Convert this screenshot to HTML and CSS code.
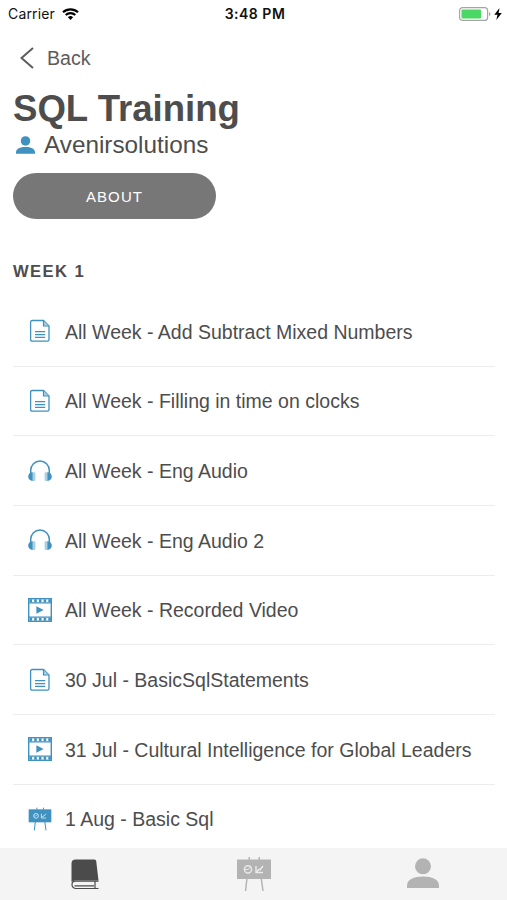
FILE: index.html
```html
<!DOCTYPE html>
<html lang="en">
<head>
<meta charset="utf-8">
<title>SQL Training</title>
<link rel="stylesheet" href="styles.css">
</head>
<body>
<svg width="0" height="0" class="sprite" aria-hidden="true">
  <symbol id="doc" viewBox="0 0 24 24">
    <path d="M4.200 1.500H15.500L21 7V20.500Q21 22.200 19.300 22.200H4.200Q2.600 22.200 2.600 20.500V3.100Q2.600 1.500 4.200 1.500Z" fill="none" stroke="currentColor" stroke-width="1.300"/>
    <path d="M15.500 1.800V7H20.800" fill="#a9d3e8" stroke="currentColor" stroke-width="1.200"/>
    <path d="M7 12.700H17.200M7 15.600H17.200M7 18.400H17.200" stroke="currentColor" stroke-width="1.300"/>
  </symbol>
  <symbol id="audio" viewBox="0 0 24 24">
    <path d="M2.700 15V11.500A9.300 9.600 0 0 1 21.300 11.500V15" fill="none" stroke="currentColor" stroke-width="1.500"/>
    <path d="M4.800 13.200C1.800 13.200.2 15.200.2 17.600S1.800 22 4.800 22ZM19.200 13.200C22.200 13.200 23.800 15.200 23.800 17.600S22.200 22 19.200 22Z" fill="currentColor"/>
    <path d="M4.800 13.200H6.300Q7.400 13.200 7.400 14.500V20.700Q7.400 22 6.300 22H4.800ZM19.200 13.200H17.700Q16.600 13.200 16.600 14.500V20.700Q16.600 22 17.700 22H19.200Z" fill="#a9d0e3"/>
  </symbol>
  <symbol id="video" viewBox="0 0 24 24">
    <rect x=".7" y=".7" width="22.600" height="22.600" fill="none" stroke="currentColor" stroke-width="1.400"/>
    <path d="M1 4.900H23M1 19.100H23" stroke="currentColor" stroke-width="1.200"/>
    <path d="M1.500 2.700H23M1.500 21.300H23" stroke="currentColor" stroke-width="3" stroke-dasharray="2.600 2.100"/>
    <path d="M8.400 8.200L15.600 12L8.400 15.800Z" fill="currentColor"/>
  </symbol>
  <symbol id="board" viewBox="0 0 36 36">
    <path d="M13.300 1V4M23.200 1V4M11 22L9.500 35M25.200 22L27 35" stroke="currentColor" stroke-width="1.500"/>
    <rect x="1" y="3.500" width="34" height="19.500" fill="currentColor"/>
    <circle cx="12" cy="13.300" r="3.600" fill="none" stroke="#fff" stroke-opacity=".7" stroke-width="1.500"/>
    <path d="M12 13.500L14.800 10.800M12 13.500H8.800" stroke="#fff" stroke-opacity=".7"/>
    <path d="M20 10V16.500H27M21 15.500L23 13.300L24 13.800L27 10" fill="none" stroke="#fff" stroke-opacity=".75" stroke-width="1.400"/>
  </symbol>
  <symbol id="person" viewBox="0 0 32 32">
    <circle cx="16" cy="8.300" r="8" fill="currentColor"/>
    <path d="M0 30V27.500C0 21.500 7 18.500 16 18.500S32 21.500 32 27.500V30Z" fill="currentColor"/>
  </symbol>
</svg>
<div class="app">
  <header class="status">
    <div class="carrier"><span>Carrier</span>
      <svg class="wifi" viewBox="0 0 17 12"><path d="M1 4.300A11 11 0 0 1 16 4.300M3.700 7A7 7 0 0 1 13.300 7" fill="none" stroke="#000" stroke-width="2.200"/><path d="M8.500 12L5.900 9.300A3.700 3.700 0 0 1 11.100 9.300Z"/></svg>
    </div>
    <div class="time">3:48 PM</div>
    <div class="power">
      <svg class="battery" viewBox="0 0 32 14"><rect x=".6" y=".6" width="28" height="12.800" rx="3" fill="#fff" stroke="#a5a5a5" stroke-width="1.200"/><rect x="2.500" y="2.500" width="19.500" height="9" rx="1" fill="#4bd763"/><path d="M30 5Q31.500 5.500 31.500 7T30 9Z" fill="#a5a5a5"/></svg>
      <svg class="bolt" viewBox="0 0 8 12"><path d="M5.500 0L.3 6.800H3.500L2.300 12L7.800 4.900H4.600Z"/></svg>
    </div>
  </header>
  <main class="content">
    <a class="back"><svg viewBox="0 0 14 22"><path d="M13 1L1.500 11L13 21" fill="none" stroke="currentColor" stroke-width="2"/></svg><span>Back</span></a>
    <h1>SQL Training</h1>
    <div class="author"><svg><use href="#person"/></svg><span>Avenirsolutions</span></div>
    <button class="about">ABOUT</button>
    <h2>WEEK 1</h2>
    <ul class="lessons">
      <li><svg><use href="#doc"/></svg><span>All Week - Add Subtract Mixed Numbers</span></li>
      <li><svg><use href="#doc"/></svg><span>All Week - Filling in time on clocks</span></li>
      <li><svg><use href="#audio"/></svg><span>All Week - Eng Audio</span></li>
      <li><svg><use href="#audio"/></svg><span>All Week - Eng Audio 2</span></li>
      <li><svg><use href="#video"/></svg><span>All Week - Recorded Video</span></li>
      <li><svg><use href="#doc"/></svg><span>30 Jul - BasicSqlStatements</span></li>
      <li><svg><use href="#video"/></svg><span>31 Jul - Cultural Intelligence for Global Leaders</span></li>
      <li><svg><use href="#board"/></svg><span>1 Aug - Basic Sql</span></li>
    </ul>
  </main>
  <nav class="tabs">
    <a class="active"><svg class="book" viewBox="0 0 28 31"><path d="M4.500.5H23.500Q25 .5 25.200 2L27.500 21.500H4Q2 21.500.5 23V4.500Q.5.5 4.500.5Z" fill="currentColor"/><path d="M27.500 22.200H4.500Q1 22.200 1 25.600T4.500 29.500H27.500M3.500 26.800H23M24 22V29" fill="none" stroke="currentColor" stroke-width="1.200"/></svg></a>
    <a><svg class="easel"><use href="#board"/></svg></a>
    <a><svg class="user"><use href="#person"/></svg></a>
  </nav>
</div>
</body>
</html>
```
FILE: styles.css
```css
* { box-sizing: border-box; }
body {
  margin: 0;
  background: #fff;
  color: #4d4d4d;
  font-family: "Liberation Sans", Arial, sans-serif;
}
.sprite { display: none; }
svg { display: block; flex: none; }
.app {
  height: 900px;
  display: flex;
  flex-direction: column;
  overflow: hidden;
}
.status {
  flex: none;
  height: 27px;
  display: grid;
  grid-template-columns: 1fr auto 1fr;
  align-items: center;
  padding: 0 5px 0 8px;
  color: #111;
  font: 14px/27px Inter, sans-serif;
}
.carrier { display: flex; align-items: center; gap: 7px; letter-spacing: .15px; }
.wifi { width: 17px; height: 12px; }
.time { font-weight: 600; letter-spacing: .5px; }
.power { display: flex; align-items: center; justify-content: flex-end; gap: 3px; }
.battery { width: 32px; height: 14px; }
.bolt { width: 8px; height: 12px; }
.content {
  flex: 1;
  min-height: 0;
  overflow: hidden;
  padding: 0 12px 0 13px;
}
.back {
  display: flex;
  align-items: center;
  gap: 13px;
  height: 62px;
  padding-left: 7px;
  font-size: 19.6px;
  color: #5c5c5c;
}
.back svg { width: 14px; height: 22px; }
h1 {
  margin: 0;
  font-size: 36.6px;
  line-height: 40px;
}
.author {
  display: flex;
  align-items: center;
  height: 32px;
  padding-left: 3px;
  gap: 9px;
  font-size: 24.3px;
}
.author svg { width: 19px; height: 19px; color: #3f91bf; }
.about {
  display: block;
  width: 203px;
  height: 46px;
  margin: 12px 0 0;
  padding: 1px 0 0;
  border: 0;
  border-radius: 23px;
  background: #777;
  color: #fff;
  font: 15px/45px "Liberation Sans", Arial, sans-serif;
  letter-spacing: 1.1px;
}
h2 {
  margin: 42px 0 0;
  font-size: 16.6px;
  line-height: 22px;
  letter-spacing: 1.4px;
}
.lessons { list-style: none; margin: 14px 0 0; padding: 0; }
.lessons li {
  height: 69.67px;
  display: flex;
  align-items: center;
  gap: 13px;
  padding-left: 15px;
  border-bottom: 1px solid #ededed;
  font-size: 19.5px;
  white-space: nowrap;
}
.lessons span { padding-top: 2px; }
.lessons svg { width: 24px; height: 24px; color: #3f91bf; }
.tabs {
  flex: none;
  height: 52px;
  display: grid;
  grid-template-columns: repeat(3, 1fr);
  place-items: center;
  background: #f4f4f4;
  color: #b3b3b3;
}
.tabs .active { color: #4b4b4b; }
.book { width: 28px; height: 31px; }
.easel { width: 36px; height: 36px; }
.user { width: 32px; height: 32px; }
```
